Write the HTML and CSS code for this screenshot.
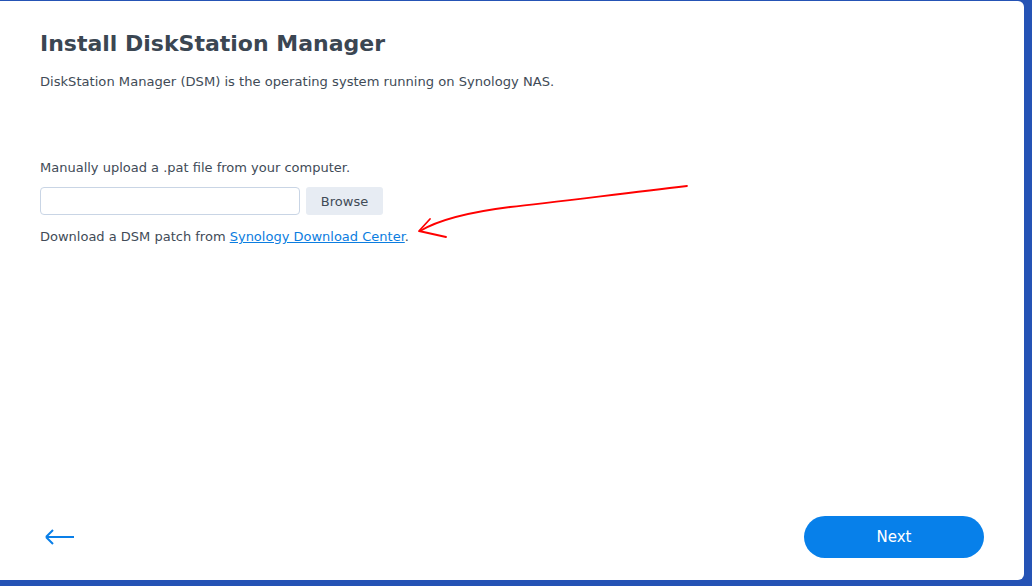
FILE: index.html
```html
<!DOCTYPE html>
<html>
<head>
    <title>Install DiskStation Manager</title>
    <meta charset="UTF-8">
    <link rel="stylesheet" href="styles.css">
</head>
<body>
    <div class="panel">
        <div class="content">
            <h1>Install DiskStation Manager</h1>
            <p class="desc">DiskStation Manager (DSM) is the operating system running on Synology NAS.</p>

            <div class="upload">
                <p class="label">Manually upload a .pat file from your computer.</p>
                <div class="file-row">
                    <input type="text" class="file-input">
                    <button class="browse">Browse</button>
                </div>
                <p class="hint">Download a DSM patch from <a href="#">Synology Download Center</a>.</p>
            </div>
        </div>

        <div class="footer">
            <span class="back">
                <svg width="32" height="20" viewBox="0 0 32 20">
                    <path d="M2 10H30M2 10L9 3M2 10L9 17" fill="none" stroke="#0a7fe8" stroke-width="2"/>
                </svg>
            </span>
            <button class="next">Next</button>
        </div>

        <svg class="scribble" width="300" height="70" viewBox="0 0 300 70">
            <path d="M287 5 C 210 14, 150 22, 110 26 C 70 31, 40 38, 20 50" fill="none" stroke="#f00" stroke-width="1.8" stroke-linecap="round"/>
            <path d="M30 38 L19 50 L46 56" fill="none" stroke="#f00" stroke-width="1.8" stroke-linecap="round" stroke-linejoin="round"/>
        </svg>
    </div>
</body>
</html>
```

FILE: styles.css
```css
html, body {
    height: 100%;
}

body {
    margin: 0;
    background-color: #2553b5;
    font-family: 'DejaVu Sans', Verdana, sans-serif;
    color: #414b57;
    padding: 1px 8px 6px 0;
    box-sizing: border-box;
}

.panel {
    position: relative;
    height: 100%;
    background-color: #fff;
    border-radius: 0 6px 6px 0;
    display: flex;
    flex-direction: column;
    justify-content: space-between;
}

.content {
    padding: 30px 40px 0 40px;
}

h1 {
    margin: 0;
    font-size: 22px;
    font-weight: bold;
    color: #3b4652;
}

.desc {
    margin: 18px 0 0 0;
    font-size: 13.1px;
}

.upload {
    margin-top: 71px;
}

.label {
    margin: 0;
    font-size: 13px;
}

.file-row {
    display: flex;
    gap: 6px;
    margin-top: 12px;
}

.file-input {
    width: 260px;
    height: 28px;
    box-sizing: border-box;
    border: 1px solid #c9d5e5;
    border-radius: 4px;
    outline: none;
}

.browse {
    width: 77px;
    height: 28px;
    border: none;
    border-radius: 3px;
    background-color: #e7ecf3;
    color: #414b57;
    font-family: 'DejaVu Sans', Verdana, sans-serif;
    font-size: 13px;
}

.hint {
    margin: 14px 0 0 0;
    font-size: 13px;
}

.hint a {
    color: #0b7de0;
}

.footer {
    display: flex;
    justify-content: space-between;
    align-items: center;
    padding: 0 40px 22px 44px;
}

.back {
    display: flex;
}

.next {
    width: 180px;
    height: 42px;
    border: none;
    border-radius: 21px;
    background-color: #0780ea;
    color: #fff;
    font-family: 'DejaVu Sans', Verdana, sans-serif;
    font-size: 15px;
}

.scribble {
    position: absolute;
    left: 400px;
    top: 180px;
}
```
